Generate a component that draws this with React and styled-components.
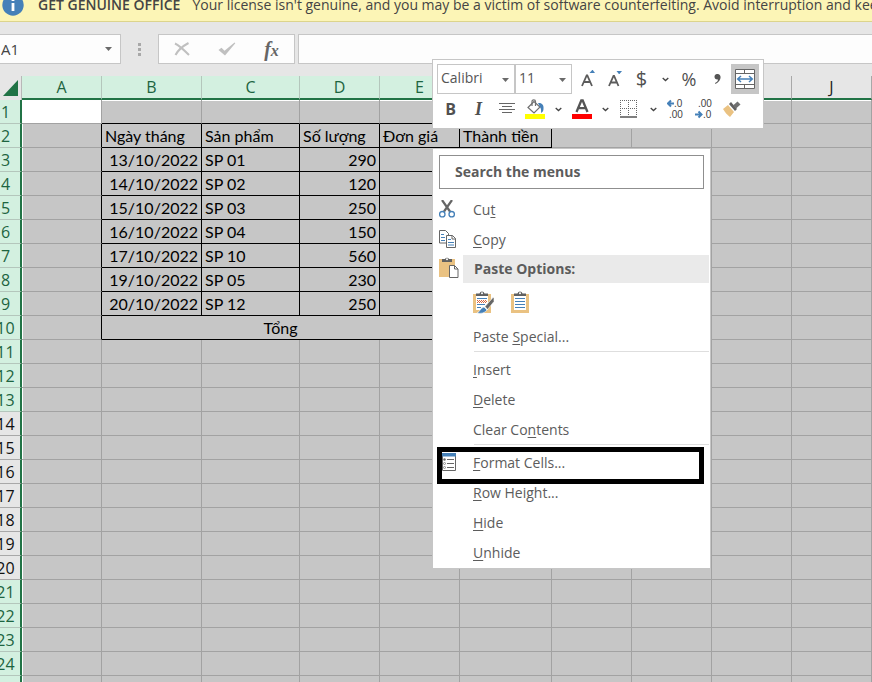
import React from 'react';
import styled, { createGlobalStyle } from 'styled-components';

const UI = '"Open Sans", "Noto Sans", sans-serif';
const CELL = 'Lato, "Open Sans", sans-serif';
const GREEN = '#217346';
const GREY = '#c6c6c6';
const BLUE = '#4580b8';
const TAN = '#eac282';

const Global = createGlobalStyle`
  * { box-sizing: border-box; }
  html, body { margin: 0; padding: 0; overflow: hidden; }
  body { background: #e6e6e6; font-family: ${UI}; }
  button, input, select { font-family: inherit; margin: 0; }
  svg { display: block; flex: none; }
`;

const Page = styled.div`
  position: relative;
  height: 100vh;
  overflow: hidden;
`;

/* ---------- licence banner ---------- */
const Banner = styled.div`
  display: flex;
  align-items: flex-end;
  height: 22px;
  padding-left: 2px;
  overflow: hidden;
  white-space: nowrap;
  background: #fcf5b6;
  border-bottom: 1px solid #dcd48c;
  color: #444444;
  font-size: 14px;
  line-height: 20px;
`;
const BannerIcon = styled.span`
  width: 22px;
  margin: 0 14px 5px 0;
`;
const BannerTitle = styled.strong`
  margin: 0 12px 6px 0;
  font-weight: 600;
`;
const BannerText = styled.span`
  margin-bottom: 6px;
`;

/* ---------- formula bar ---------- */
const FormulaBar = styled.div`
  display: flex;
  height: 54px;
  padding-top: 12px;
`;
const NameBox = styled.label`
  display: flex;
  align-items: center;
  width: 121px;
  height: 30px;
  padding-right: 8px;
  background: #fdfdfd;
  border: 1px solid ${GREY};
  border-left: 0;
`;
const NameInput = styled.input`
  flex: 1;
  min-width: 0;
  padding: 0 0 0 1px;
  border: 0;
  outline: 0;
  background: transparent;
  color: #444444;
  font-size: 15px;
`;
const Grip = styled.div`
  display: flex;
  flex-direction: column;
  justify-content: center;
  align-items: center;
  gap: 2px;
  width: 37px;
  height: 30px;
`;
const Dot = styled.span`
  width: 3px;
  height: 3px;
  background: #a8a8a8;
`;
const FormulaButtons = styled.div`
  display: flex;
  justify-content: space-around;
  align-items: center;
  width: 137px;
  height: 30px;
  margin-right: 3px;
  background: #fdfdfd;
  border: 1px solid ${GREY};
`;
const BarButton = styled.button`
  display: flex;
  justify-content: center;
  align-items: center;
  width: 44px;
  height: 28px;
  padding: 0;
  border: 0;
  background: transparent;
  color: #666666;
  font: italic bold 20px/24px "Liberation Serif", serif;
`;
const Sub = styled.span`
  font-size: 16px;
  padding-top: 3px;
`;
const FormulaInput = styled.input`
  flex: 1;
  min-width: 0;
  height: 30px;
  padding: 0 6px;
  background: #fdfdfd;
  border: 1px solid ${GREY};
  border-right: 0;
  outline: 0;
`;

/* ---------- sheet ---------- */
const Sheet = styled.table`
  width: 100%;
  table-layout: fixed;
  border-collapse: separate;
  border-spacing: 0;
  font-family: ${CELL};
  font-size: 16px;
  line-height: 20px;
  color: #000000;
`;
const Col = styled.col`
  width: ${(p) => (p.$w ? `${p.$w}px` : 'auto')};
`;
const Corner = styled.td`
  height: 24px;
  padding: 0 0 0 3px;
  border-right: 1px solid #b8b8b8;
`;
const ColHead = styled.th`
  height: 24px;
  padding: 0;
  background: ${(p) => (p.$on ? '#d3f0e0' : '#e6e6e6')};
  border-right: 1px solid ${(p) => (p.$on ? '#b4c6bc' : '#a8a8a8')};
  border-bottom: 2px solid ${GREEN};
  color: ${(p) => (p.$on ? '#1d6440' : '#222222')};
  font: 400 16px/22px ${UI};
`;
const RowHead = styled.th`
  height: 24px;
  padding: 1px 9px 0 0;
  background: ${(p) => (p.$on ? '#d3f0e0' : '#e6e6e6')};
  border-right: 2px solid ${GREEN};
  border-bottom: 1px solid ${(p) => (p.$on ? '#b4c6bc' : '#a8a8a8')};
  color: ${(p) => (p.$on ? '#1d6440' : '#111111')};
  font: 400 16px/22px ${UI};
`;
const RowNumber = styled.span`
  display: flex;
  justify-content: center;
`;
const Cell = styled.td`
  height: 24px;
  padding: 0 3px;
  overflow: hidden;
  white-space: nowrap;
  background: ${(p) => (p.$active ? '#ffffff' : GREY)};
  border-right: 1px solid ${(p) => (p.$right ? '#000000' : '#a2a2a2')};
  border-bottom: 1px solid ${(p) => (p.$bottom ? '#000000' : '#a2a2a2')};
  box-shadow: ${(p) => (p.$edge === 'left' ? 'inset 1px 0 #ffffff' : p.$edge === 'top' ? 'inset 0 1px #ffffff' : 'none')};
  text-align: ${(p) => p.$align || 'left'};
`;

/* ---------- mini toolbar ---------- */
const MiniBar = styled.div`
  position: absolute;
  left: 432px;
  top: 59px;
  padding: 4px;
  background: #ffffff;
  border: 1px solid ${GREY};
`;
const ToolRow = styled.div`
  display: flex;
  align-items: center;
  height: 30px;
`;
const SelectBox = styled.label`
  display: flex;
  position: relative;
  width: ${(p) => p.$w}px;
  height: 30px;
  margin-right: ${(p) => p.$gap || 0}px;
  border: 1px solid ${GREY};
`;
const Select = styled.select`
  width: 100%;
  padding: 0 0 3px 3px;
  border: 0;
  outline: 0;
  appearance: none;
  background: transparent;
  color: #555555;
  font-size: 14px;
`;
const SelectArrow = styled.span`
  position: absolute;
  right: 5px;
  top: 13px;
  pointer-events: none;
`;
const Tool = styled.button`
  display: flex;
  justify-content: center;
  align-items: center;
  width: ${(p) => p.$w}px;
  height: 30px;
  padding: 0;
  border: 0;
  background: ${(p) => (p.$on ? GREY : 'transparent')};
  color: #505050;
  && { font-family: ${(p) => (p.$serif ? '"Liberation Serif", serif' : UI)}; }
  font-size: ${(p) => p.$size || 16}px;
  font-weight: ${(p) => (p.$bold ? 700 : 400)};
  font-style: ${(p) => (p.$italic ? 'italic' : 'normal')};
  line-height: 24px;
`;

/* ---------- context menu ---------- */
const Menu = styled.div`
  position: absolute;
  left: 432px;
  top: 148px;
  width: 279px;
  padding: 6px 1px 0 0;
  background: #ffffff;
  border: 1px solid ${GREY};
  color: #5c5c5c;
  font-size: 14px;
`;
const Search = styled.input`
  && {
    display: block;
    width: 265px;
    height: 34px;
    margin: 0 0 6px 6px;
  }
  padding: 0 15px 2px;
  border: 1px solid #8f8f8f;
  outline: 0;
  background: #ffffff;
  font-size: 14px;
  font-weight: 700;
  &::placeholder { color: #5c5c5c; opacity: 1; }
`;
const Item = styled.button`
  display: flex;
  align-items: center;
  position: relative;
  width: 100%;
  height: 30px;
  padding: 0 0 0 6px;
  border: 0;
  background: transparent;
  color: inherit;
  font-size: 14px;
  line-height: 20px;
  text-align: left;
  &::after {
    content: "";
    display: ${(p) => (p.$marked ? 'block' : 'none')};
    position: absolute;
    inset: -1px 5px -6px 4px;
    border: 5px solid #000000;
    z-index: 1;
  }
`;
const IconSlot = styled.span`
  display: flex;
  flex: none;
  width: 34px;
  padding-bottom: 3px;
`;
const Key = styled.u`
  text-underline-offset: 2px;
`;
const PasteHeader = styled.div`
  display: flex;
  align-items: center;
  height: 28px;
  padding-left: 6px;
`;
const PasteSlot = styled.span`
  width: 24px;
  padding-bottom: 3px;
`;
const PasteTitle = styled.strong`
  flex: 1;
  padding-left: 11px;
  background: #eaeaea;
  line-height: 28px;
`;
const PasteChoices = styled.div`
  display: flex;
  align-items: center;
  gap: 15px;
  height: 39px;
  padding-left: 40px;
`;
const PasteChoice = styled.button`
  display: flex;
  width: 23px;
  height: 24px;
  padding: 0;
  border: 0;
  background: transparent;
`;
const Rule = styled.hr`
  height: 1px;
  margin: -1px 0 3px 41px;
  border: 0;
  background: #dedede;
`;

/* ---------- drawings ---------- */
const Caret = () => (
  <svg width="7" height="4" viewBox="0 0 7 4"><path d="M0 0h7L3.5 4z" fill="#6a6a6a" /></svg>
);
const Chevron = () => (
  <svg width="7" height="5" viewBox="0 0 7 5"><path d="M.7 1l2.8 2.6L6.3 1" fill="none" stroke="#444" strokeWidth="1.3" /></svg>
);
const InfoIcon = () => (
  <svg width="22" height="22" viewBox="0 0 22 22">
    <circle cx="11" cy="11" r="10.7" fill={BLUE} />
    <path d="M11 9v8M11 4.4v2.6" stroke="#fff" strokeWidth="2.8" />
  </svg>
);
const CrossIcon = () => (
  <svg width="16" height="14" viewBox="0 0 16 14">
    <path d="M1 1.5C6 4 10 8 15 13M14.5 1C9 4 4 8 1.5 13" fill="none" stroke="#c0c0c0" strokeWidth="2" />
  </svg>
);
const TickIcon = () => (
  <svg width="18" height="14" viewBox="0 0 18 14">
    <path d="M.5 8l3-2.2 3 3L16.5 .5l.8.8L7 13.5z" fill="#c0c0c0" />
  </svg>
);
const CornerIcon = () => (
  <svg width="15" height="16" viewBox="0 0 15 16"><path d="M15 0v16H0z" fill={GREEN} /></svg>
);
const FontSizeIcon = ({ up }) => (
  <svg width="14" height="18" viewBox="0 0 14 18">
    <path d={up ? 'M1 16L5.7 5.5h.6L11 16M2.8 12h6.4' : 'M1 16L5.5 6h.6L10.5 16M2.8 12.5h6'} fill="none" stroke="#5c5c5c" strokeWidth="1.8" />
    <path d={up ? 'M8.5 3L11.2 0h.6L14 3z' : 'M8.5 1h5.5L11.5 4h-.6z'} fill={BLUE} />
  </svg>
);
const MergeIcon = () => (
  <svg width="20" height="20" viewBox="0 0 20 20">
    <path d="M.5.5h19v19H.5z" fill="#fff" stroke="#666" />
    <path d="M.5 4.5h19M.5 15.5h19M9.5 .5V4.5M9.5 15v4.5" stroke="#666" fill="none" />
    <path d="M2.5 10h15M6 7l-3.3 3L6 13M14 7l3.3 3L14 13" stroke={BLUE} strokeWidth="1.5" fill="none" />
  </svg>
);
const CenterIcon = () => (
  <svg width="16" height="12" viewBox="0 0 16 12">
    <path d="M0 .5h16M3 3.5h10M0 6.5h16M3 9.5h10" stroke="#666" />
  </svg>
);
const FillIcon = () => (
  <svg width="20" height="20" viewBox="0 0 20 20">
    <path d="M9 2.5L3 8.5l6 5.5 6-6z" fill="#fff" stroke="#707070" strokeWidth="1.2" />
    <path d="M7 7V2.5C7 .2 10.5.2 10.5 2.5V7" fill="none" stroke="#707070" strokeWidth="1.2" />
    <path d="M13 4c4-.5 6 2 5.5 6 0 2-1 3-2.5 4 .3-3 0-4.5-1-6z" fill={BLUE} />
    <path d="M0 15h20v5H0z" fill="#ffff00" />
  </svg>
);
const FontColorIcon = () => (
  <svg width="20" height="20" viewBox="0 0 20 20">
    <path d="M4.5 13L9.3 1.5h1.4L15.5 13M6.5 9.2h7" fill="none" stroke="#555" strokeWidth="2.3" />
    <path d="M0 15h20v5H0z" fill="#ff0000" />
  </svg>
);
const BordersIcon = () => (
  <svg width="17" height="18" viewBox="0 0 17 18">
    <path d="M0 .5h17M.5 0v16M16.5 0v16M8.5 0v16M0 8.5h17" stroke="#666" strokeDasharray="1 1" />
    <path d="M0 17h17" stroke="#555" strokeWidth="1.5" />
  </svg>
);
const DigitText = styled.text`
  font-family: "Liberation Sans", sans-serif;
  font-size: 10px;
  fill: #444444;
`;
const DecimalIcon = ({ more }) => (
  <svg width="18" height="22" viewBox="0 0 18 22">
    <DigitText x={more ? 7 : 3} y="9">{more ? '.0' : '.00'}</DigitText>
    <DigitText x={more ? 2 : 8} y="20">{more ? '.00' : '.0'}</DigitText>
    <path d={more ? 'M7 5.5H1.5M4 2.5L1 5.5l3 3' : 'M0 16.5h6M3.5 13.5l3 3-3 3'} fill="none" stroke={BLUE} strokeWidth="2" />
  </svg>
);
const BrushIcon = () => (
  <svg width="18" height="16" viewBox="0 0 18 16">
    <path d="M0 8l5-4 6 7-4 5C4 14 2 11 0 8z" fill={TAN} />
    <path d="M6 3l2-2 6 7-2 2z" fill="#606060" />
    <path d="M10 4.5L14.5 .5 17.5 3.500 13 7.5z" fill="#707070" />
  </svg>
);
const CutIcon = () => (
  <svg width="16" height="18" viewBox="0 0 16 18">
    <path d="M3 0l8 11.5M13 0L5 11.5" stroke="#666" strokeWidth="2.2" />
    <circle cx="3.3" cy="14.2" r="2.7" fill="#fff" stroke={BLUE} strokeWidth="1.3" />
    <circle cx="12.7" cy="14.2" r="2.7" fill="#fff" stroke={BLUE} strokeWidth="1.3" />
  </svg>
);
const CopyIcon = () => (
  <svg width="18" height="18" viewBox="0 0 18 18">
    <path d="M.5.5h6l3 3v9.5h-9z" fill="#fff" stroke="#666" />
    <path d="M2 4.5h3M2 7.5h4M2 10.5h4" stroke={BLUE} />
    <path d="M7.5 5.5h6l3 3v9h-9z" fill="#fff" stroke="#666" />
    <path d="M13 5.5v3.5h4" fill="none" stroke="#666" />
    <path d="M9 9.5h3M9 12.5h6M9 15h6" stroke={BLUE} />
  </svg>
);
const PasteIcon = () => (
  <svg width="20" height="21" viewBox="0 0 20 21">
    <path d="M0 2h16v18H0z" fill={TAN} />
    <path d="M3 5V2h3a2.2 2.2 0 014 0h3v3z" fill="#606060" />
    <circle cx="8" cy="2.3" r="1" fill="#fff" />
    <path d="M10.5 8.5h5l3.5 3.5v8.5h-8.5z" fill="#fff" stroke="#666" />
    <path d="M15.5 8.5V12H19" fill="none" stroke="#666" />
  </svg>
);
const Clipboard = ({ formatted }) => (
  <svg width="23" height="24" viewBox="0 0 23 24">
    <path d="M0 3h18v19H0z" fill={TAN} />
    <path d="M3 5h12v14H3z" fill="#fff" />
    <path d="M3 5V2.500h3.5a2.6 2.6 0 015 0H15V5z" fill="#606060" />
    <circle cx="9" cy="2.3" r="1" fill="#fff" />
    <path d={formatted ? 'M4 7.5h10M4 13.5h8M4 16.5h4' : 'M4 7.5h10M4 10.5h10M4 13.5h10M4 16.5h10'} stroke={BLUE} />
    {formatted && (
      <>
        <path d="M4 9.5h10M5 10.5h9M4 11.5h10" stroke="#d8663f" strokeDasharray="1 1" />
        <path d="M11 16l3 3c-2 3-6 4-10 3 3-1 3-5 7-6z" fill={BLUE} stroke="#fff" strokeWidth=".6" />
        <path d="M12 15.5L20 6.5h1v4l-6.5 8z" fill="#666" stroke="#fff" strokeWidth=".6" />
      </>
    )}
  </svg>
);
const FormatIcon = () => (
  <svg width="18" height="18" viewBox="0 0 18 18">
    <path d="M3.5 1v16.5h13V1" fill="#fff" stroke="#666" />
    <path d="M3 0h14v3.5H3z" fill={BLUE} />
    <path d="M8 6.5h7M8 10.5h7M8 14.5h7" stroke="#666" />
    <circle cx="5.5" cy="6.5" r="1.2" fill="#666" />
    <circle cx="5.5" cy="10.5" r="1" fill="none" stroke="#777" strokeWidth=".8" />
    <circle cx="5.5" cy="14.5" r="1" fill="none" stroke="#777" strokeWidth=".8" />
  </svg>
);

/* ---------- data ---------- */
const columns = [
  ['A', 80], ['B', 100], ['C', 98], ['D', 80], ['E', 80],
  ['F', 92], ['G', 80], ['H', 80], ['I', 80], ['J', 0],
];
const values = {
  2: ['Ngày tháng', 'Sản phẩm', 'Số lượng', 'Đơn giá', 'Thành tiền'],
  3: ['13/10/2022', 'SP 01', '290'],
  4: ['14/10/2022', 'SP 02', '120'],
  5: ['15/10/2022', 'SP 03', '250'],
  6: ['16/10/2022', 'SP 04', '150'],
  7: ['17/10/2022', 'SP 10', '560'],
  8: ['19/10/2022', 'SP 05', '230'],
  9: ['20/10/2022', 'SP 12', '250'],
};
const rowNumbers = Array.from({ length: 24 }, (_, i) => i + 1);
const plainRow = (n) => n >= 14 && n <= 20;

function SheetRow({ n }) {
  const boxed = n >= 2 && n <= 10;
  return (
    <tr>
      <RowHead scope="row" $on={!plainRow(n)}><RowNumber>{n}</RowNumber></RowHead>
      {columns.map(([name], i) => {
        const inside = i >= 1 && i <= 5;
        if (n === 10 && i >= 2 && i <= 4) return null;
        if (n === 10 && i === 1) {
          return <Cell key={name} colSpan={4} $right $bottom $align="center">Tổng</Cell>;
        }
        const right = boxed && i <= 5;
        const bottom = inside && n <= 10;
        const align = n > 2 && (i === 1 || i === 3) ? 'right' : 'left';
        const edge = n === 1 ? 'top' : i === 0 ? 'left' : undefined;
        return (
          <Cell key={name} $active={n === 1 && i === 0} $right={right} $bottom={bottom} $align={align} $edge={edge}>
            {inside && values[n] ? values[n][i - 1] : null}
          </Cell>
        );
      })}
    </tr>
  );
}

function MenuItem({ before = '', k, after = '', icon, marked }) {
  return (
    <Item type="button" role="menuitem" $marked={marked}>
      <IconSlot>{icon}</IconSlot>
      <span>{before}<Key>{k}</Key>{after}</span>
    </Item>
  );
}

export default function App() {
  return (
    <Page>
      <Global />
      <Banner>
        <BannerIcon><InfoIcon /></BannerIcon>
        <BannerTitle>GET GENUINE OFFICE</BannerTitle>
        <BannerText>Your license isn't genuine, and you may be a victim of software counterfeiting. Avoid interruption and keep your files safe.</BannerText>
      </Banner>

      <FormulaBar>
        <NameBox>
          <NameInput aria-label="Name box" defaultValue="A1" />
          <Caret />
        </NameBox>
        <Grip><Dot /><Dot /><Dot /></Grip>
        <FormulaButtons>
          <BarButton type="button" aria-label="Cancel"><CrossIcon /></BarButton>
          <BarButton type="button" aria-label="Enter"><TickIcon /></BarButton>
          <BarButton type="button" aria-label="Insert function">f<Sub>x</Sub></BarButton>
        </FormulaButtons>
        <FormulaInput aria-label="Formula" />
      </FormulaBar>

      <Sheet>
        <colgroup>
          <Col $w={22} />
          {columns.map(([name, w]) => <Col key={name} $w={w} />)}
        </colgroup>
        <thead>
          <tr>
            <Corner><CornerIcon /></Corner>
            {columns.map(([name], i) => <ColHead key={name} scope="col" $on={i < 8}>{name}</ColHead>)}
          </tr>
        </thead>
        <tbody>
          {rowNumbers.map((n) => <SheetRow key={n} n={n} />)}
          <tr>
            <RowHead $on />
            {columns.map(([name], i) => <Cell key={name} $edge={i === 0 ? 'left' : undefined} />)}
          </tr>
        </tbody>
      </Sheet>

      <MiniBar role="toolbar" aria-label="Cell formatting">
        <ToolRow>
          <SelectBox $w={78}>
            <Select aria-label="Font"><option>Calibri</option></Select>
            <SelectArrow><Caret /></SelectArrow>
          </SelectBox>
          <SelectBox $w={57} $gap={3}>
            <Select aria-label="Font size"><option>11</option></Select>
            <SelectArrow><Caret /></SelectArrow>
          </SelectBox>
          <Tool $w={26} aria-label="Increase font size"><FontSizeIcon up /></Tool>
          <Tool $w={27} aria-label="Decrease font size"><FontSizeIcon /></Tool>
          <Tool $w={27} $size={20}>$</Tool>
          <Tool $w={20} aria-label="Currency options"><Chevron /></Tool>
          <Tool $w={28} $size={18}>%</Tool>
          <Tool $w={28} aria-label="Comma style">
            <svg width="7" height="10" viewBox="0 0 7 10"><path d="M3 0c5-.3 5 7-1.5 10l-.5-1c2-1 3-2 3-3.5C-.5 6-.5.2 3 0z" fill="#555" /></svg>
          </Tool>
          <Tool $w={28} $on aria-label="Merge and center"><MergeIcon /></Tool>
        </ToolRow>
        <ToolRow>
          <Tool $w={27} $bold>B</Tool>
          <Tool $w={29} $bold $italic $serif $size={18}>I</Tool>
          <Tool $w={28} aria-label="Center"><CenterIcon /></Tool>
          <Tool $w={28} aria-label="Fill color"><FillIcon /></Tool>
          <Tool $w={18} aria-label="Fill color options"><Chevron /></Tool>
          <Tool $w={30} aria-label="Font color"><FontColorIcon /></Tool>
          <Tool $w={16} aria-label="Font color options"><Chevron /></Tool>
          <Tool $w={31} aria-label="Borders"><BordersIcon /></Tool>
          <Tool $w={18} aria-label="Border options"><Chevron /></Tool>
          <Tool $w={28} aria-label="Increase decimal"><DecimalIcon more /></Tool>
          <Tool $w={28} aria-label="Decrease decimal"><DecimalIcon /></Tool>
          <Tool $w={28} aria-label="Format painter"><BrushIcon /></Tool>
        </ToolRow>
      </MiniBar>

      <Menu role="menu">
        <Search aria-label="Search the menus" placeholder="Search the menus" />
        <MenuItem before="Cu" k="t" icon={<CutIcon />} />
        <MenuItem k="C" after="opy" icon={<CopyIcon />} />
        <PasteHeader>
          <PasteSlot><PasteIcon /></PasteSlot>
          <PasteTitle>Paste Options:</PasteTitle>
        </PasteHeader>
        <PasteChoices>
          <PasteChoice type="button" aria-label="Keep source formatting"><Clipboard formatted /></PasteChoice>
          <PasteChoice type="button" aria-label="Keep text only"><Clipboard /></PasteChoice>
        </PasteChoices>
        <MenuItem before="Paste " k="S" after="pecial..." />
        <Rule />
        <MenuItem k="I" after="nsert" />
        <MenuItem k="D" after="elete" />
        <MenuItem before="Clear Co" k="n" after="tents" />
        <Rule />
        <MenuItem k="F" after="ormat Cells..." icon={<FormatIcon />} marked />
        <MenuItem k="R" after="ow Height..." />
        <MenuItem k="H" after="ide" />
        <MenuItem k="U" after="nhide" />
      </Menu>
    </Page>
  );
}
